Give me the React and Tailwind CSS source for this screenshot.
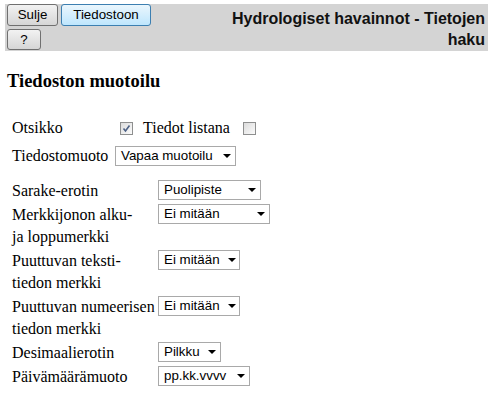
import React from 'react';

const Button = ({ children, active, className = '' }) => (
  <button
    className={`flex items-center justify-center rounded-[3px] border text-[13.33px] leading-none text-black font-['Liberation_Sans',Arial,sans-serif] ${
      active
        ? 'border-[#3c7fb1] bg-gradient-to-b from-[#eaf6fd] to-[#bee6fd]'
        : 'border-[#707070] bg-gradient-to-b from-[#f2f2f2] to-[#d6d6d6]'
    } ${className}`}
  >
    {children}
  </button>
);

const Checkbox = ({ checked }) => (
  <span className="block w-[13px] h-[13px] border border-[#8e8f8f] bg-gradient-to-br from-[#dcdcdc] to-[#fbfbfb] relative">
    {checked && (
      <svg viewBox="0 0 11 11" className="absolute inset-0 w-[11px] h-[11px]">
        <path d="M2.5 5.5 L4.5 8 L8.5 2.5" fill="none" stroke="#4d6185" strokeWidth="1.6" />
      </svg>
    )}
  </span>
);

const Select = ({ value, width }) => (
  <div
    className="h-[20px] flex items-center justify-between border border-[#a9a9a9] bg-white pl-[5px] pr-[4px] text-[13.33px] leading-[18px] text-black font-['Liberation_Sans',Arial,sans-serif]"
    style={{ width }}
  >
    <span className="whitespace-nowrap">{value}</span>
    <svg width="8" height="4" viewBox="0 0 8 4" className="ml-2 shrink-0">
      <path d="M0 0 H8 L4 4 Z" fill="#000" />
    </svg>
  </div>
);

const rows = [
  { label: ['Sarake-erotin'], value: 'Puolipiste', width: 103 },
  { label: ['Merkkijonon alku-', 'ja loppumerkki'], value: 'Ei mitään', width: 112 },
  { label: ['Puuttuvan teksti-', 'tiedon merkki'], value: 'Ei mitään', width: 82 },
  { label: ['Puuttuvan numeerisen', 'tiedon merkki'], value: 'Ei mitään', width: 82 },
  { label: ['Desimaalierotin'], value: 'Pilkku', width: 63 },
  { label: ['Päivämäärämuoto'], value: 'pp.kk.vvvv', width: 92 },
];

export default function App() {
  return (
    <div className="w-[491px] h-[397px] bg-white font-['Liberation_Serif','Times_New_Roman',serif] text-black overflow-hidden">
      {/* header bar */}
      <div className="mt-[4px] ml-[5px] mr-[3px] h-[47px] bg-[#d4d4d4] flex justify-between">
        <div className="pl-[2px] flex flex-col gap-[3px]">
          <div className="flex gap-[3px]">
            <Button className="w-[51px] h-[22px]">Sulje</Button>
            <Button active className="w-[90px] h-[22px]">Tiedostoon</Button>
          </div>
          <Button className="w-[34px] h-[21px]">?</Button>
        </div>
        <div className="w-[272px] pt-[4px] pr-[3px] text-right font-['Liberation_Sans',Arial,sans-serif] font-bold text-[16px] leading-[21px] text-[#111]">
          Hydrologiset havainnot - Tietojen haku
        </div>
      </div>

      <h3 className="mt-[20px] ml-[7px] text-[18.5px] font-bold leading-[21px]">Tiedoston muotoilu</h3>

      {/* first table */}
      <div className="mt-[25px] ml-[12px] text-[16px] leading-[22px]">
        <div className="flex items-center h-[22px]">
          <span className="w-[108px]">Otsikko</span>
          <Checkbox checked />
          <span className="ml-[10px] w-[100px]">Tiedot listana</span>
          <Checkbox />
        </div>
        <div className="flex items-center h-[22px] mt-[6px]">
          <span className="w-[103px]">Tiedostomuoto</span>
          <Select value="Vapaa muotoilu" width={121} />
        </div>
      </div>

      {/* second table */}
      <div className="mt-[13px] ml-[12px] flex flex-col gap-[2px] text-[16px] leading-[22px]">
        {rows.map((r, i) => (
          <div key={i} className="flex items-start">
            <div className="w-[146px]">
              {r.label.map((l, j) => (
                <div key={j} className="whitespace-nowrap">{l}</div>
              ))}
            </div>
            <Select value={r.value} width={r.width} />
          </div>
        ))}
      </div>
    </div>
  );
}
